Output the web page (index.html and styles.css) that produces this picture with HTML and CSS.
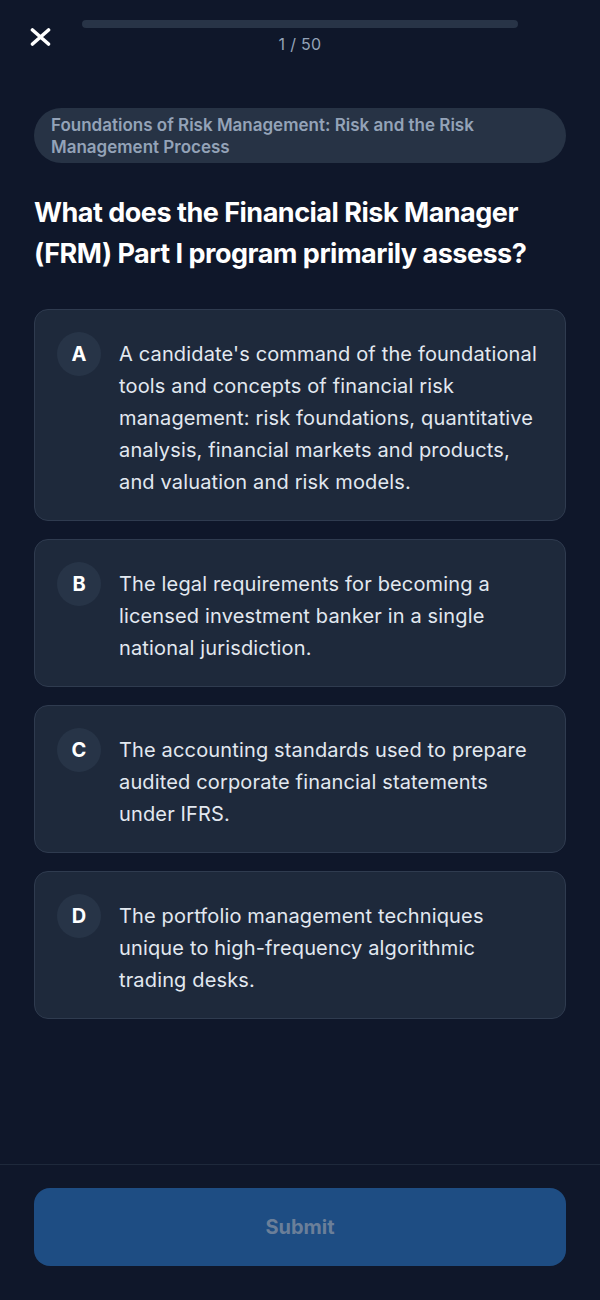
FILE: index.html
```html
<!DOCTYPE html>
<html lang="en">
<head>
<meta charset="utf-8">
<title>Quiz</title>
<link rel="stylesheet" href="styles.css">
</head>
<body>
<div class="screen">
  <header class="top">
    <button class="close" aria-label="Close">
      <svg width="21" height="18" viewBox="0 0 21 18" fill="none" stroke="#ffffff" stroke-width="3.6" stroke-linecap="round">
        <path d="M2.5 2 L18.5 16 M18.5 2 L2.5 16"/>
      </svg>
    </button>
    <div class="progress">
      <div class="bar"><div class="fill" style="width:0%"></div></div>
      <div class="count">1 / 50</div>
    </div>
  </header>

  <main class="content">
    <div class="topic">Foundations of Risk Management: Risk and the Risk Management Process</div>
    <h1 class="question">What does the Financial Risk Manager (FRM) Part I program primarily assess?</h1>

    <div class="options">
      <div class="option">
        <div class="badge">A</div>
        <div class="text">A candidate's command of the foundational tools and concepts of financial risk management: risk foundations, quantitative analysis, financial markets and products, and valuation and risk models.</div>
      </div>
      <div class="option">
        <div class="badge">B</div>
        <div class="text">The legal requirements for becoming a licensed investment banker in a single national jurisdiction.</div>
      </div>
      <div class="option">
        <div class="badge">C</div>
        <div class="text">The accounting standards used to prepare audited corporate financial statements under IFRS.</div>
      </div>
      <div class="option">
        <div class="badge">D</div>
        <div class="text">The portfolio management techniques unique to high-frequency algorithmic trading desks.</div>
      </div>
    </div>
  </main>

  <footer class="footer">
    <button class="submit" disabled>Submit</button>
  </footer>
</div>
</body>
</html>
```

FILE: styles.css
```css
* { box-sizing: border-box; }

html, body {
  margin: 0;
  padding: 0;
  background: #0f172a;
}

body {
  font-family: Inter, "Noto Sans", "Liberation Sans", sans-serif;
  color: #ffffff;
}

.screen {
  width: 600px;
  min-height: 1300px;
  display: flex;
  flex-direction: column;
}

.top {
  display: grid;
  grid-template-columns: 52px 1fr 52px;
  padding: 20px 30px 0;
}

.close {
  grid-column: 1;
  background: none;
  border: 0;
  padding: 0;
  margin-top: 8px;
  width: 21px;
  height: 18px;
  display: block;
}

.close svg { display: block; }

.progress {
  grid-column: 2;
  display: flex;
  flex-direction: column;
  align-items: center;
}

.bar {
  width: 100%;
  height: 8px;
  border-radius: 4px;
  background: #283447;
  overflow: hidden;
}

.fill {
  height: 100%;
  background: #3b82f6;
}

.count {
  margin-top: 6px;
  font-size: 16px;
  line-height: 21px;
  letter-spacing: 0.3px;
  color: #94a3b8;
}

.content {
  flex: 1;
  padding: 53px 34px 0;
}

.topic {
  background: #273345;
  border-radius: 28px;
  padding: 5.5px 17px;
  font-size: 17px;
  line-height: 22px;
  font-weight: 600;
  color: #94a3b8;
}

.question {
  margin: 29px 0 0;
  font-size: 27px;
  line-height: 41px;
  font-weight: 700;
  color: #ffffff;
  letter-spacing: -0.5px;
}

.options {
  margin-top: 35px;
  display: flex;
  flex-direction: column;
  gap: 18px;
}

.option {
  display: flex;
  align-items: flex-start;
  gap: 18px;
  background: #1e293b;
  border: 1px solid #2f3b4f;
  border-radius: 14px;
  padding: 22px;
}

.badge {
  flex: none;
  width: 44px;
  height: 44px;
  border-radius: 50%;
  background: #273447;
  display: flex;
  align-items: center;
  justify-content: center;
  font-size: 20px;
  font-weight: 700;
  color: #ffffff;
}

.text {
  margin-top: 6px;
  font-size: 20px;
  line-height: 32px;
  letter-spacing: 0.15px;
  color: #e2e8f0;
}

.footer {
  border-top: 1px solid #1e293b;
  padding: 23px 34px 34px;
}

.submit {
  width: 100%;
  height: 78px;
  border: 0;
  border-radius: 16px;
  background: #1e4d83;
  color: #6b7f99;
  font-family: Inter, "Noto Sans", "Liberation Sans", sans-serif;
  font-size: 20px;
  font-weight: 700;
}
```
